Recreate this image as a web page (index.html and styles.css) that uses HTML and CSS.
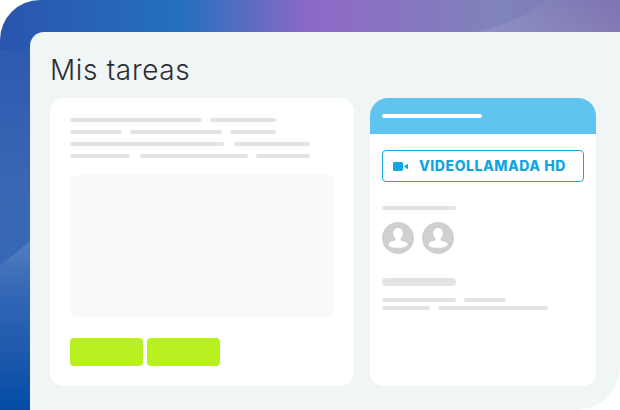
FILE: index.html
```html
<!DOCTYPE html>
<html lang="es">
<head>
<meta charset="utf-8">
<title>Mis tareas</title>
<link rel="stylesheet" href="styles.css">
</head>
<body>
<div class="frame">
  <svg class="streaks" width="620" height="410" viewBox="0 0 620 410" aria-hidden="true">
    <defs>
      <linearGradient id="fadeLeft" x1="0" y1="0" x2="0" y2="1"><stop offset="0" stop-color="#fff" stop-opacity=".14"/><stop offset="1" stop-color="#fff" stop-opacity="0"/></linearGradient>
      <linearGradient id="fadeTop" x1="0" y1="1" x2="1" y2="0"><stop offset="0" stop-color="#fff" stop-opacity=".1"/><stop offset="1" stop-color="#fff" stop-opacity="0"/></linearGradient>
    </defs>
    <path fill="url(#fadeLeft)" d="M0 266 L30 241 L30 290 L0 290 Z"/>
    <path fill="url(#fadeTop)" d="M476 32 Q 525 20 546 0 L620 0 L620 32 Z"/>
  </svg>
  <main class="panel">
    <h1 class="title">Mis tareas</h1>
    <div class="columns">
      <section class="card-left">
        <div class="lines">
          <div class="row"><i class="bar w132"></i><i class="bar w66 g8"></i></div>
          <div class="row"><i class="bar w52"></i><i class="bar w92 g8"></i><i class="bar w46 g8"></i></div>
          <div class="row"><i class="bar w154"></i><i class="bar w76 g10"></i></div>
          <div class="row"><i class="bar w60"></i><i class="bar w108 g10"></i><i class="bar w54 g8"></i></div>
        </div>
        <div class="placeholder"></div>
        <div class="actions"><span class="lime"></span><span class="lime"></span></div>
      </section>
      <section class="card-right">
        <header class="card-head"><i class="head-bar"></i></header>
        <div class="card-body">
          <div class="video-btn">
            <svg class="cam" width="15" height="9" viewBox="0 0 15 9" aria-hidden="true"><rect width="10" height="9" rx="1.4"/><path d="M11 4.500 L14 2.200 Q15 1.600 15 2.500 V6.500 Q15 7.400 14 6.800 Z"/></svg>
            <span>VIDEOLLAMADA HD</span>
          </div>
          <i class="bar w74 label"></i>
          <div class="avatars">
            <svg class="avatar" viewBox="0 0 32 32" aria-hidden="true"><circle class="av-bg" cx="16" cy="16" r="16"/><path class="av-fg" d="M16 6c3 0 4.800 2.300 4.800 5.300 0 2.200-.9 4.200-2.200 5.300v1.500c0 1 4.200 1.300 6.200 2.800 1 .8 1 2.200 0 3-1.600 1.200-5.400 1.900-8.800 1.900s-7.200-.7-8.800-1.900c-1-.8-1-2.200 0-3 2-1.500 6.200-1.800 6.200-2.800v-1.500c-1.300-1.100-2.200-3.100-2.200-5.300 0-3 1.800-5.300 4.800-5.300z"/></svg>
            <svg class="avatar" viewBox="0 0 32 32" aria-hidden="true"><circle class="av-bg" cx="16" cy="16" r="16"/><path class="av-fg" d="M16 6c3 0 4.800 2.300 4.800 5.300 0 2.200-.9 4.200-2.200 5.300v1.500c0 1 4.200 1.300 6.200 2.800 1 .8 1 2.200 0 3-1.600 1.200-5.400 1.900-8.800 1.900s-7.200-.7-8.800-1.900c-1-.8-1-2.200 0-3 2-1.500 6.200-1.800 6.200-2.800v-1.500c-1.300-1.100-2.200-3.100-2.200-5.300 0-3 1.800-5.300 4.800-5.300z"/></svg>
          </div>
          <i class="thick"></i>
          <div class="row r2"><i class="bar w74"></i><i class="bar w42 g8"></i></div>
          <div class="row r3"><i class="bar w48"></i><i class="bar w110 g8"></i></div>
        </div>
      </section>
    </div>
  </main>
</div>
</body>
</html>
```
FILE: styles.css
```css
html, body { margin: 0; padding: 0; background: #fff; }
body { width: 620px; height: 410px; overflow: hidden; }
.frame {
  position: relative; width: 620px; height: 410px; box-sizing: border-box;
  padding: 32px 0 0 30px; overflow: hidden;
  border-radius: 40px 0 0 0;
  background-image:
    linear-gradient(90deg, #2a55ad 0, #2470bd 180px, #8e69c6 312px, #8083bb 500px, #7e74b2 620px),
    linear-gradient(180deg, #2a55ad 0, #3a68b5 200px, #3568b7 290px, #1f5aac 350px, #034da8 410px);
  background-size: 100% 50px, 50px 100%;
  background-repeat: no-repeat;
}
.streaks { position: absolute; left: 0; top: 0; }
.panel {
  position: relative; width: 590px; height: 378px; box-sizing: border-box;
  padding: 20px 24px 0 20px; background: #f0f5f6;
  border-radius: 14px 0 44px 0;
}
.title {
  margin: 0; height: 46px; font: 300 28px/36px "Inter", "Liberation Sans", sans-serif;
  color: #2b2e30; letter-spacing: .65px;
}
.columns { display: flex; gap: 16px; }
.card-left {
  width: 304px; height: 288px; box-sizing: border-box; padding: 20px 20px 0;
  background: #fff; border-radius: 14px;
}
.lines { display: flex; flex-direction: column; gap: 8px; }
.row { display: flex; height: 4px; }
.bar { display: block; height: 4px; border-radius: 2px; background: #e3e3e3; flex: none; }
.g8 { margin-left: 8px; } .g10 { margin-left: 10px; }
.w42 { width: 42px; } .w46 { width: 46px; } .w48 { width: 48px; } .w52 { width: 52px; }
.w54 { width: 54px; } .w60 { width: 60px; } .w66 { width: 66px; } .w74 { width: 74px; }
.w76 { width: 76px; } .w92 { width: 92px; } .w108 { width: 108px; } .w110 { width: 110px; }
.w132 { width: 132px; } .w154 { width: 154px; }
.placeholder {
  width: 264px; height: 142px; margin-top: 17px; background: #f8f9f9; border-radius: 6px;
}
.actions { display: flex; gap: 3.4px; margin-top: 21px; }
.lime { width: 73.3px; height: 28px; background: #b9f020; border-radius: 4px; }
.card-right {
  width: 226px; height: 288px; background: #fff; border-radius: 18px 18px 14px 14px; overflow: hidden;
}
.card-head {
  height: 36px; box-sizing: border-box; padding-top: 16px; background: #61c3f0;
}
.head-bar { display: block; width: 100px; height: 4px; margin-left: 12px; background: #fff; border-radius: 2px; }
.card-body { padding: 16px 12px 0; }
.video-btn {
  display: flex; align-items: center; width: 202px; height: 32px; box-sizing: border-box;
  padding-left: 10px; border: 1px solid #1aa7e0; border-radius: 4px; color: #11a6e2;
  font: 800 14px/1 "Inter", "Liberation Sans", sans-serif; letter-spacing: .55px;
}
.cam { fill: #11a6e2; margin-right: 11px; flex: none; }
.label { margin-top: 24px; }
.avatars { display: flex; gap: 8px; margin-top: 12px; }
.avatar { width: 32px; height: 32px; display: block; }
.av-bg { fill: #d0d0d0; }
.av-fg { fill: #fff; }
.thick { display: block; width: 74px; height: 8px; margin-top: 24px; border-radius: 4px; background: #e3e3e3; }
.r2 { margin-top: 12px; }
.r3 { margin-top: 4px; }
```
